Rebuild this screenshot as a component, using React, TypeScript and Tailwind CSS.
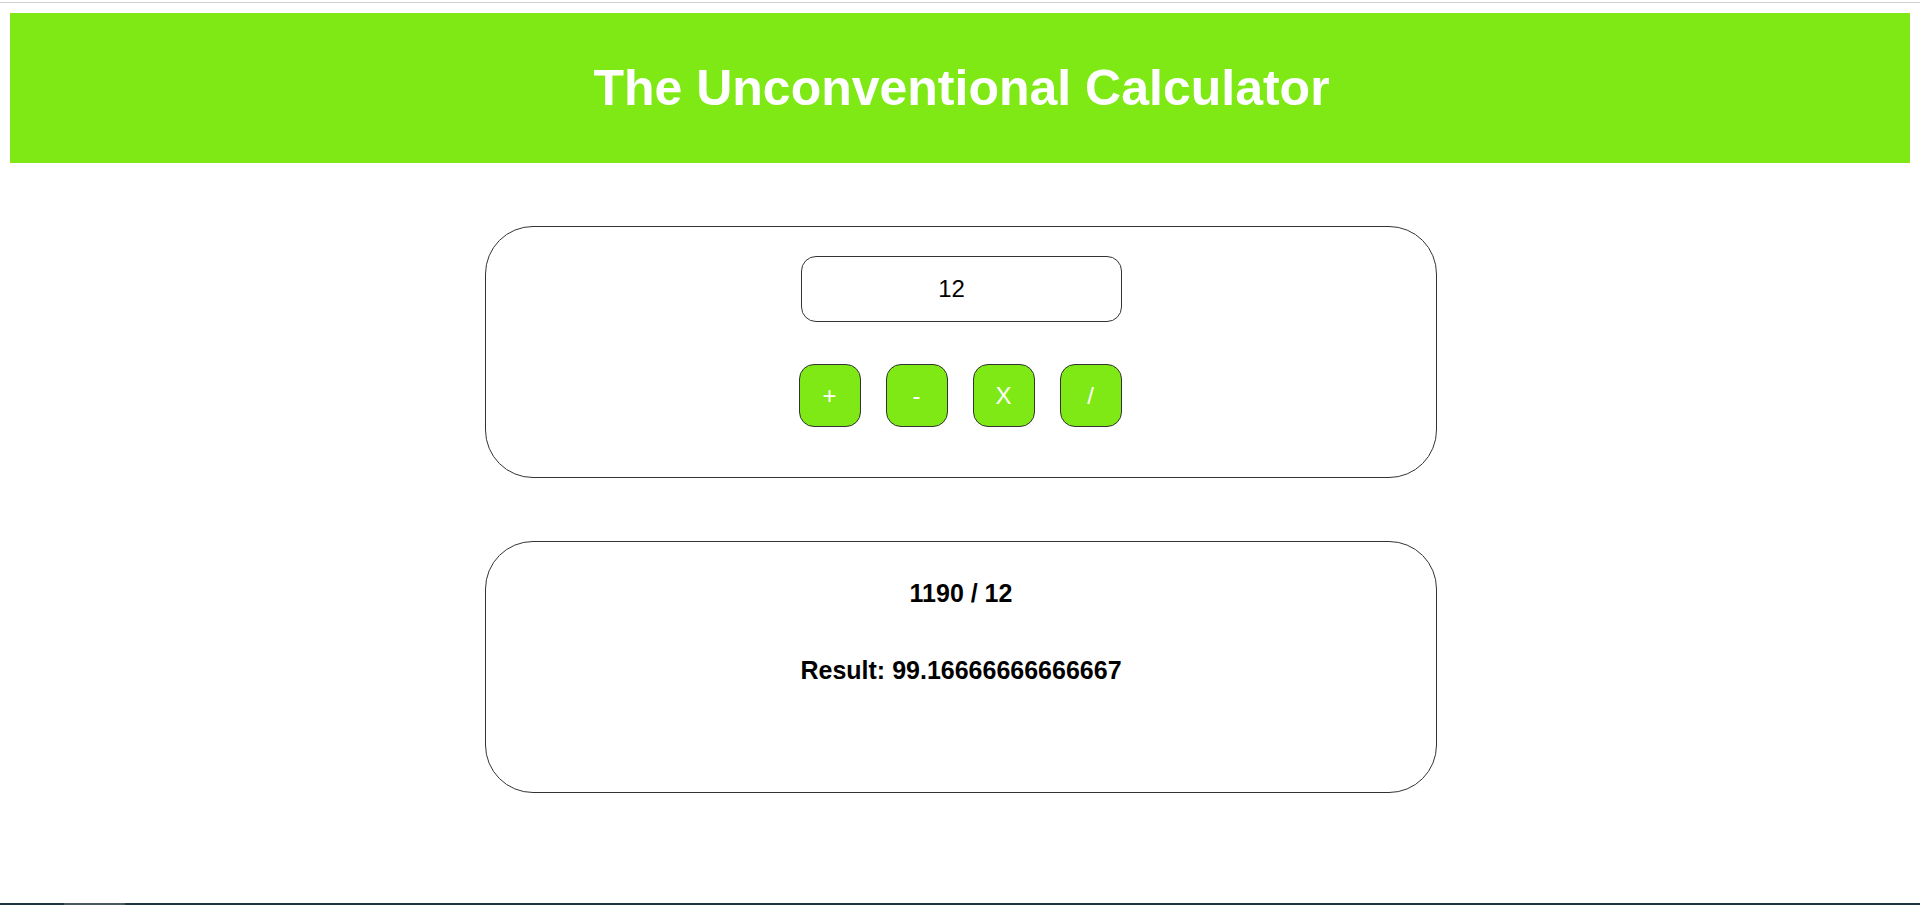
import React from "react";

export default function App() {
  const ops = ["+", "-", "X", "/"];
  return (
    <div
      className="min-h-[905px] h-[905px] flex flex-col bg-white overflow-hidden"
      style={{ fontFamily: '"Liberation Sans", Arial, sans-serif' }}
    >
      <div className="h-[2px]" />
      <div className="h-px bg-[#d0d0d0]" />
      <div className="mx-[10px] mt-[10px] h-[150px] bg-[#7ee915] flex items-center justify-center">
        <h1 className="text-white font-bold text-[50px] leading-[56px] pl-[3px]">
          The Unconventional Calculator
        </h1>
      </div>

      <div className="mt-[63px] mx-auto w-[952px] h-[252px] border border-[#333] rounded-[48px] flex flex-col items-center pt-[29px] translate-x-[1px]">
        <div className="w-[321px] h-[66px] border border-[#333] rounded-[15px] flex items-center justify-center pr-[19px] text-[24px] text-black">
          12
        </div>
        <div className="mt-[42px] flex gap-[25px] -translate-x-[1px]">
          {ops.map((o) => (
            <button
              key={o}
              className="w-[62px] h-[63px] bg-[#7ee915] border border-[#333] rounded-[15px] text-white text-[24px] flex items-center justify-center"
            >
              {o}
            </button>
          ))}
        </div>
      </div>

      <div className="mt-[63px] mx-auto w-[952px] h-[252px] border border-[#333] rounded-[48px] flex flex-col items-center pt-[37px] translate-x-[1px]">
        <h3 className="font-bold text-[25px] leading-[29px] text-black">1190 / 12</h3>
        <h3 className="mt-[48px] font-bold text-[25px] leading-[29px] text-black">
          Result: 99.16666666666667
        </h3>
      </div>

      <div className="mt-auto h-[2px] flex">
        <div className="w-[64px] bg-[#1f3540]" />
        <div className="w-[61px] bg-[#48585f]" />
        <div className="flex-1 bg-[#1f3540]" />
      </div>
    </div>
  );
}
